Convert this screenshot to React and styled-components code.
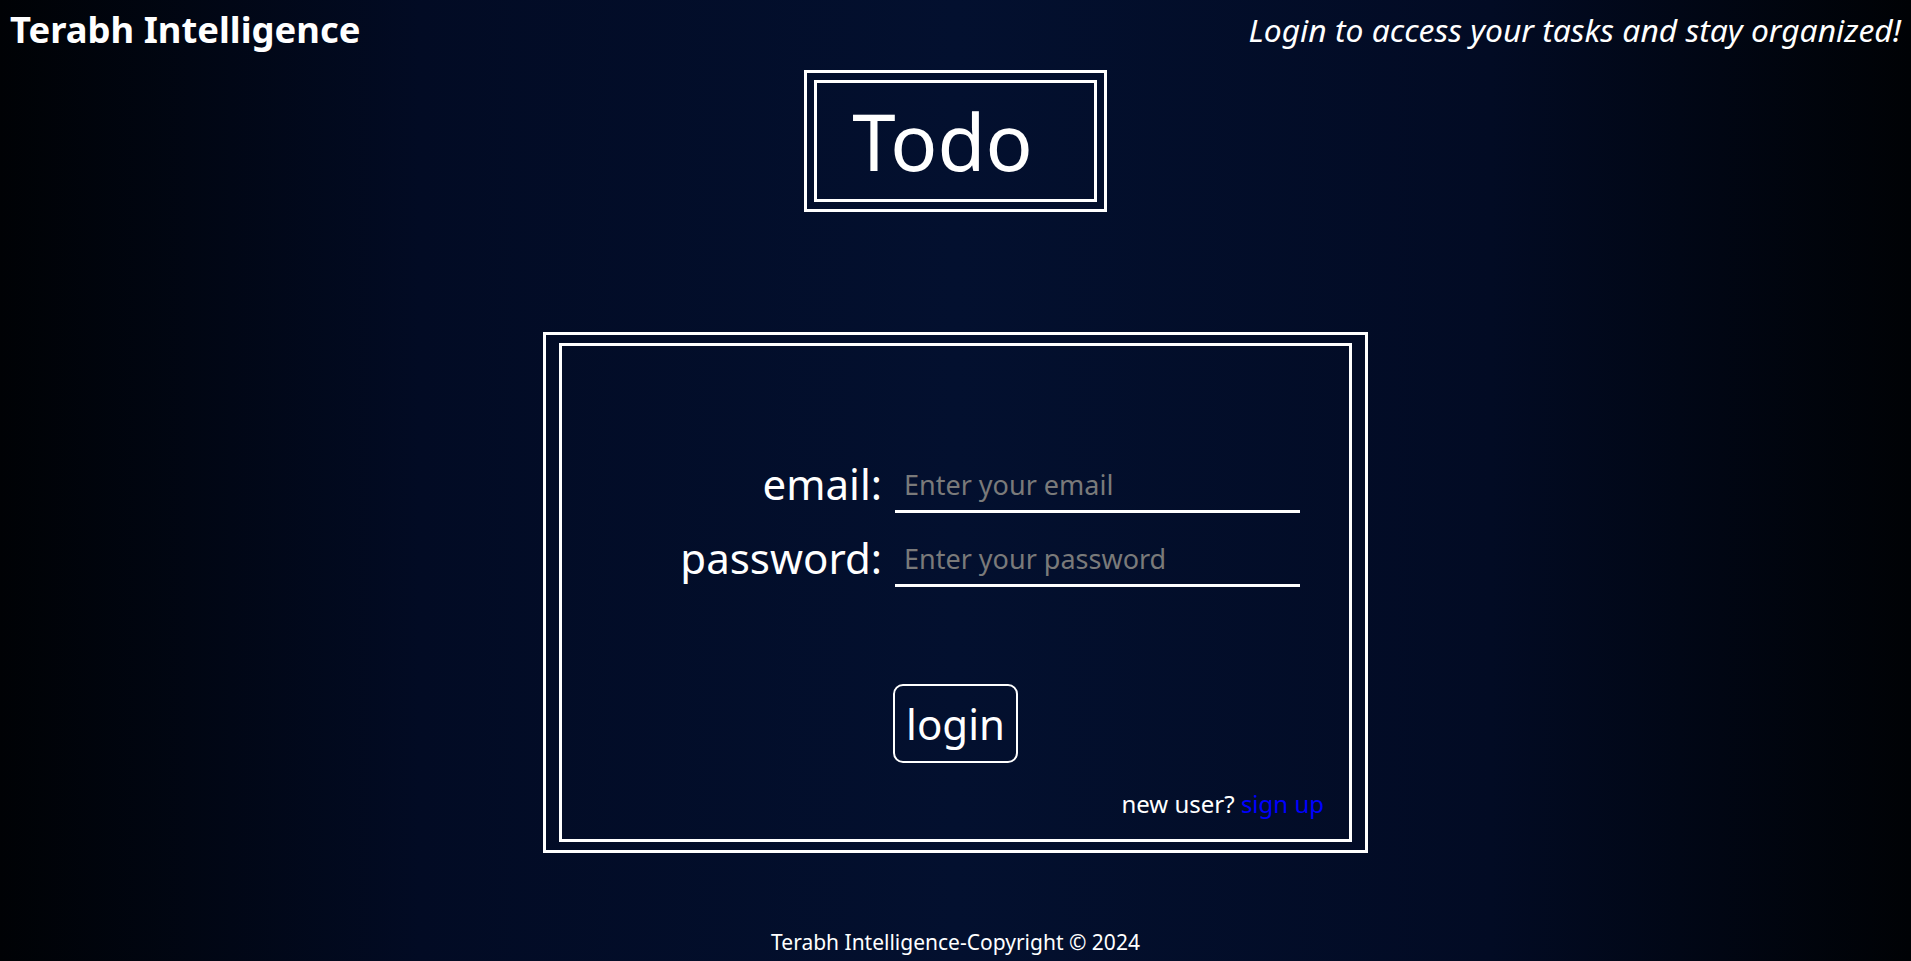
import React, { useState } from "react";
import styled, { createGlobalStyle } from "styled-components";

const GlobalStyle = createGlobalStyle`
    html, body {
        margin: 0;
        padding: 0;
    }
    body {
        font-family: "Noto Sans", "Open Sans", sans-serif;
        color: #ffffff;
        background: #000;
    }
`;

const Page = styled.div`
    min-height: 100vh;
    box-sizing: border-box;
    display: flex;
    flex-direction: column;
    align-items: center;
    background: linear-gradient(90deg, #000205 0%, #020b24 22%, #03102f 50%, #020b24 78%, #000205 100%);
    overflow: hidden;
`;

const Header = styled.header`
    align-self: stretch;
    display: flex;
    justify-content: space-between;
    align-items: center;
    padding: 5px 10px 0 10px;
    height: 49px;
`;

const Brand = styled.h1`
    margin: 0;
    font-size: 36.4px;
    font-weight: 700;
    line-height: 49px;
`;

const Tagline = styled.p`
    margin: 0;
    font-size: 31.8px;
    font-style: italic;
    line-height: 43px;
`;

// double border frame, used for the title and the form
const Frame = styled.div`
    border: 3px solid #fff;
    padding: ${props => props.$gap};
    margin-top: ${props => props.$top};
`;

const FrameInner = styled.div`
    border: 3px solid #fff;
`;

const Title = styled.div`
    font-size: 78px;
    line-height: 106px;
    padding: 5px 61px 5px 35px;
`;

const LoginForm = styled.form`
    width: 787px;
    height: 493px;
    box-sizing: border-box;
    padding-top: 109px;
    display: flex;
    flex-direction: column;
`;

const Fields = styled.div`
    display: grid;
    grid-template-columns: 320px 405px;
    column-gap: 13px;
    row-gap: 16px;
    align-items: end;
`;

const Label = styled.label`
    text-align: right;
    font-size: 42px;
    line-height: 57px;
    padding-bottom: 1px;
`;

const Input = styled.input`
    height: 55px;
    box-sizing: border-box;
    background: transparent;
    border: none;
    border-bottom: 3px solid #fff;
    outline: none;
    padding: 0 9px;
    font-family: "Noto Sans", sans-serif;
    font-size: 27px;
    color: #fff;
    &::placeholder {
        color: #7a7a7a;
    }
`;

const LoginButton = styled.button`
    align-self: center;
    margin-top: 97px;
    height: 79px;
    padding: 0 11px;
    background: transparent;
    border: 2px solid #fff;
    border-radius: 10px;
    color: #fff;
    font-family: "Noto Sans", sans-serif;
    font-size: 42px;
    line-height: 57px;
    cursor: pointer;
`;

const SignUpRow = styled.div`
    align-self: flex-end;
    margin-top: 24px;
    padding-right: 25px;
    font-size: 24px;
    line-height: 33px;
`;

const SignUpLink = styled.a`
    color: #0000ff;
    text-decoration: none;
`;

const Footer = styled.footer`
    margin-top: 75px;
    font-size: 21px;
    line-height: 28px;
`;

const App = () => {

    const [loginForm, setLoginForm] = useState({ email: '', password: '' })

    const handleChangeInput = e => {
        setLoginForm({
            ...loginForm,
            [e.target.name]: e.target.value
        })
    }

    const handleSubmit = e => {
        e.preventDefault();
    }

    return (
        <>
        <GlobalStyle />
        <Page>
            <Header>
                <Brand>Terabh Intelligence</Brand>
                <Tagline>Login to access your tasks and stay organized!</Tagline>
            </Header>

            <Frame $gap="7px" $top="16px">
                <FrameInner>
                    <Title>Todo</Title>
                </FrameInner>
            </Frame>

            <Frame $gap="8px 13px" $top="120px">
                <FrameInner>
                    <LoginForm onSubmit={handleSubmit}>
                        <Fields>
                            <Label htmlFor="email">email:</Label>
                            <Input type="email" id="email" name="email" placeholder="Enter your email" value={loginForm.email} onChange={handleChangeInput} />
                            <Label htmlFor="password">password:</Label>
                            <Input type="password" id="password" name="password" placeholder="Enter your password" value={loginForm.password} onChange={handleChangeInput} />
                        </Fields>
                        <LoginButton type="submit">login</LoginButton>
                        <SignUpRow>new user? <SignUpLink href="#">sign up</SignUpLink></SignUpRow>
                    </LoginForm>
                </FrameInner>
            </Frame>

            <Footer>Terabh Intelligence-Copyright © 2024</Footer>
        </Page>
        </>
    )
}
export default App
